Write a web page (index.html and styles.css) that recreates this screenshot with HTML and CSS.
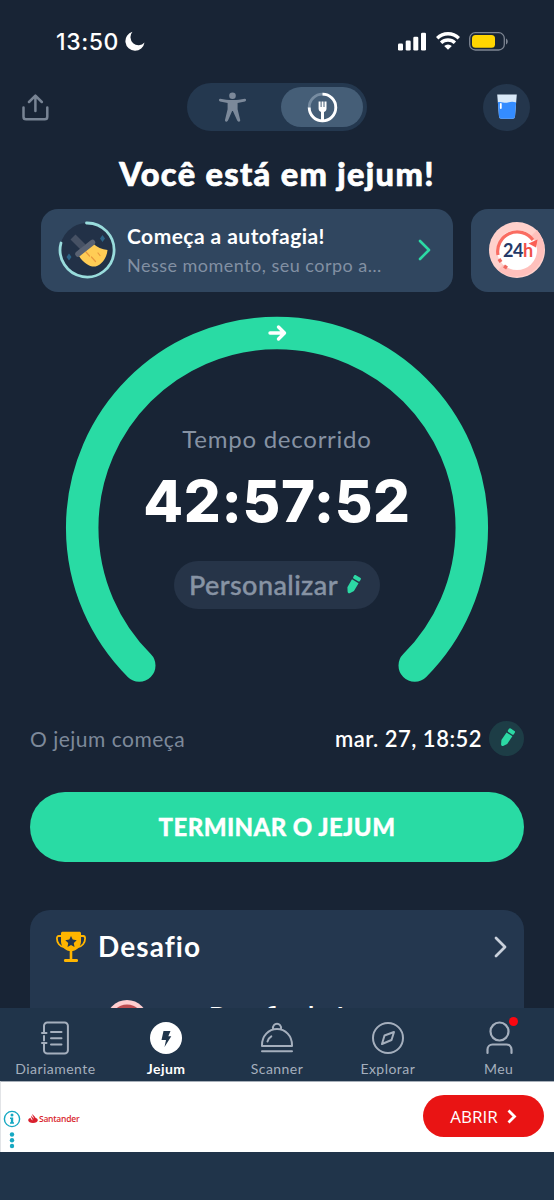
FILE: index.html
```html
<!DOCTYPE html>
<html lang="pt-BR">
<head>
<meta charset="utf-8">
<title>Jejum</title>
<link rel="stylesheet" href="styles.css">
</head>
<body>
<div class="app">
  <header class="status">
    <div class="clock"><span class="time">13:50</span>
      <svg width="20" height="20" viewBox="0 0 20 20"><path d="M7.500.8A9.600 9.600 0 1 0 19.500 11.500 8 8 0 0 1 7.500.8Z" fill="#fff"/></svg>
    </div>
    <div class="signals">
      <svg width="29" height="19" viewBox="0 0 29 19" fill="#fff"><rect x="0" y="11.5" width="5" height="7" rx="1.3"/><rect x="7.7" y="8.5" width="5" height="10" rx="1.3"/><rect x="15.3" y="4.7" width="5" height="13.8" rx="1.3"/><rect x="23" y=".8" width="5" height="17.7" rx="1.3"/></svg>
      <svg width="24" height="18" viewBox="0 0 24 18" fill="none" stroke="#fff" stroke-width="3.400"><path d="M1.200 6.200a15.500 15.500 0 0 1 21.600 0M5.100 10.700a10 10 0 0 1 13.800 0"/><path d="M12 17.700 8.200 14a5.500 5.500 0 0 1 7.600 0Z" fill="#fff" stroke="none"/></svg>
      <svg width="39" height="19" viewBox="0 0 39 19"><rect x=".7" y=".7" width="34.6" height="17.3" rx="5.6" fill="none" stroke="#7d8592" stroke-width="1.3"/><rect x="3" y="3" width="23" height="12.7" rx="3.5" fill="#ffd500"/><path d="M37 6.5v6c2.3-1 2.3-5 0-6Z" fill="#7d8592"/></svg>
    </div>
  </header>

  <div class="toolbar">
    <svg class="share" width="27" height="27" viewBox="0 0 27 27" fill="none" stroke="#788494" stroke-width="2.5" stroke-linecap="round" stroke-linejoin="round"><path d="M1.500 13.500v9.200a2.600 2.600 0 0 0 2.600 2.600h18.600a2.600 2.600 0 0 0 2.600-2.600v-9.200M13.400 17V2M7 8l6.400-6.400L19.800 8"/></svg>
    <div class="switch">
      <div class="switch-item">
        <svg width="27" height="30" viewBox="0 0 27 30" fill="#7c899a"><circle cx="13.500" cy="3.800" r="3.300"/><path d="M1.300 6.800c4 .8 7.500 1.300 12.200 1.300s8.200-.5 12.200-1.300c1.700-.2 1.900 2.300.3 2.700L18.600 11v6.200l2.600 10.700c.3 1.900-2.300 2.500-3 .7L13.900 19h-.8L9 28.600c-.7 1.800-3.300 1.200-3-.7l2.600-10.700V11L1 9.500C-.6 9.100-.4 6.600 1.300 6.800Z"/></svg>
      </div>
      <div class="switch-item active">
        <svg width="31" height="31" viewBox="0 0 31 31" fill="none" stroke="#fff"><circle cx="15.500" cy="15.500" r="13.300" stroke="#778ca1" stroke-width="2.800"/><path d="M15.500 2.200A13.300 13.300 0 1 1 2.200 15.500" stroke-width="2.800"/><path d="M15.500 17.500V29" stroke-width="3"/><path d="M11.600 9.500h2V15h1V9.500h1.900V15h1V9.500h2v7.200c0 2.300-1.700 3.500-3.900 3.500s-4-1.200-4-3.500Z" fill="#fff" stroke="none"/></svg>
      </div>
    </div>
    <div class="water">
      <svg width="20" height="26" viewBox="0 0 20 26"><path d="M.2.500h19.600L18 22.500a2.500 2.500 0 0 1-2.500 2.200h-11A2.500 2.500 0 0 1 2 22.500Z" fill="#d9e9f8"/><path d="M.9 8.300c3.500-1.200 6.500 1.300 10 .2 3-.9 5.500-.9 8.200 0L18 22.500a2.500 2.500 0 0 1-2.500 2.200h-11A2.500 2.500 0 0 1 2 22.500Z" fill="#348cff"/><path d="M3.800 10v4" stroke="#fff" stroke-width="1.800" stroke-linecap="round"/></svg>
    </div>
  </div>

  <h1 class="title"><span>Você está em jejum!</span></h1>

  <div class="carousel">
    <div class="stage">
      <svg class="stage-icon" width="58" height="58" viewBox="0 0 58 58"><circle cx="29" cy="29" r="27" fill="#223147"/><path d="M28.500 2A27 27 0 1 1 3 22" fill="none" stroke="#99dcdc" stroke-width="2.800" stroke-linecap="round"/><path d="m15 16 10 10" stroke="#465164" stroke-width="7"/><path d="m21 35 14-12.500c4 4 9 5.500 14.500 6.500-.5 7-5 14.500-12 16.500-5 .8-12-3-16.500-10.500Z" fill="#ffcc55"/><path d="m28 31 3.500 4M33.500 36l4 4.500M40 32l2 2.500" stroke="#e9983d" stroke-width="1.200" stroke-linecap="round"/><path d="m20 33 14.500-11.500" stroke="#596273" stroke-width="5.500" stroke-linecap="round"/><path d="m44.500 14 2.500 3.500-2.500 3.500-2.500-3.500ZM11 32.500l2.500 3.500-2.500 3.500L8.500 36Z" fill="#2c6487"/></svg>
      <div class="stage-copy"><strong>Começa a autofagia!</strong><span>Nesse momento, seu corpo a…</span></div>
      <svg class="stage-arrow" width="13" height="22" viewBox="0 0 13 22" fill="none" stroke="#2cd9a4" stroke-width="2.600" stroke-linecap="round" stroke-linejoin="round"><path d="m2 2 9 9-9 9"/></svg>
    </div>
    <div class="stage next">
      <svg width="58" height="58" viewBox="0 0 58 58"><circle cx="29" cy="29" r="28" fill="#ffd1cc"/><path d="M49 9A28 28 0 0 1 10 49Z" fill="#ffc0bc"/><circle cx="29" cy="29" r="20" fill="#fff"/><path d="M10 34A19.500 19.500 0 0 1 45 19" fill="none" stroke="#fa6c61" stroke-width="3.200"/><path d="m40.500 22.500 9-4-1.500 8Z" fill="#fa5f55"/><path d="m11 38 2 3M16 45l3 2" stroke="#ef6860" stroke-width="3.400"/><text x="15" y="35.500" class="badge-24" fill="#243968">24<tspan fill="#ef5148">h</tspan></text></svg>
    </div>
  </div>

  <section class="timer">
    <svg class="ring" width="424" height="368" viewBox="0 0 424 368" fill="none"><path d="M74.250 349.500A194.800 194.800 0 1 1 349.750 349.500" stroke="#29dba4" stroke-width="32.500" stroke-linecap="round"/><path d="M205 17h14M213.500 11l6 6-6 6" stroke="#fff" stroke-width="3.400" stroke-linecap="round" stroke-linejoin="round"/></svg>
    <div class="timer-copy">
      <div class="elapsed-label"><span>Tempo decorrido</span></div>
      <div class="elapsed"><span>42:57:52</span></div>
      <button class="customize"><span>Personalizar</span><svg width="16" height="20" viewBox="0 0 16 20" fill="#2cd9a4"><g transform="rotate(30 8 10)"><rect x="4.300" y="0" width="7.600" height="4.300" rx="1.300"/><path d="M4.300 5.600h7.600v9.200l-2.300 3.600c-.8 1.300-2.200 1.300-3 0l-2.300-3.600Z"/></g></svg></button>
    </div>
  </section>

  <div class="start-row">
    <span class="start-label">O jejum começa</span>
    <span class="start-date">mar. 27, 18:52</span>
    <span class="edit"><svg width="16" height="20" viewBox="0 0 16 20" fill="#2cd9a4"><g transform="rotate(34 8 10)"><rect x="4.500" y="0" width="7" height="4.300" rx="1.300"/><path d="M4.500 5.600h7v9.200l-2 3.600c-.8 1.300-2.200 1.300-3 0l-2-3.600Z"/></g></svg></span>
  </div>

  <button class="finish"><span>TERMINAR O JEJUM</span></button>

  <section class="challenge">
    <div class="challenge-head">
      <svg width="30" height="32" viewBox="0 0 30 32"><path d="M5.500 5H2.800C1.500 5 .9 6 .9 7.500c0 4.500 3 8 7 8.500M24.500 5h2.700c1.300 0 1.900 1 1.900 2.500 0 4.500-3 8-7 8.500" fill="none" stroke="#ffb500" stroke-width="1.800"/><path d="M5 2.200C5 1.200 5.800.7 6.700.7h16.600c.9 0 1.700.5 1.700 1.500v8c0 5.500-4 9-8.700 9.800V28h4.200c1.100 0 1.600.7 1.600 1.500s-.5 1.500-1.600 1.500h-11c-1.100 0-1.600-.7-1.600-1.500S8.400 28 9.500 28h4.200v-8C9 19.200 5 15.700 5 10.200Z" fill="#ffb500"/><path d="m15 5 1.700 3.600 4 .6-2.900 2.800.7 4L15 14.100 11.500 16l.7-4-2.900-2.800 4-.6Z" fill="#24374f"/></svg>
      <h2>Desafio</h2>
      <svg width="13" height="22" viewBox="0 0 13 22" fill="none" stroke="#c9d0db" stroke-width="2.800" stroke-linecap="round" stroke-linejoin="round"><path d="m2 2 9 9-9 9"/></svg>
    </div>
    <div class="challenge-body">
      <svg width="42" height="42" viewBox="0 0 42 42"><circle cx="21" cy="21" r="21" fill="#ffced0"/><circle cx="21" cy="21" r="16.500" fill="#bd4c50"/></svg>
      <span>Desafio de J</span>
    </div>
  </section>

  <nav class="tabs">
    <div class="tab"><svg width="32" height="34" viewBox="0 0 32 34" fill="none" stroke="#a5afbd" stroke-width="2" stroke-linecap="round"><path d="M5 8.500V4.800A3.300 3.300 0 0 1 8.300 1.500h17.300A3.300 3.300 0 0 1 28.900 4.800v24.400a3.300 3.300 0 0 1-3.300 3.300H8.300A3.300 3.300 0 0 1 5 29.200v-3.700M5 15v4.500M3 12h4.500M3 22h4.500M12 11h10.500M12 17.300h10.500M12 23.500h10.500M5 8.500V12M5 22v3.500"/></svg><span>Diariamente</span></div>
    <div class="tab selected"><svg width="32" height="34" viewBox="0 0 32 34"><circle cx="16" cy="17" r="16" fill="#fff"/><path d="M13.500 10h7l-2.200 5.200h3L14.500 26 16 19h-4.500Z" fill="#20354b"/></svg><span>Jejum</span></div>
    <div class="tab"><svg width="34" height="34" viewBox="0 0 34 34" fill="none" stroke="#a5afbd" stroke-width="2" stroke-linecap="round" stroke-linejoin="round"><path d="M2 25v-1C2 15 8.500 8 17 8S32 15 32 24v1ZM2 30.300h30M13 8C12 1 22 1 21 8M7.500 20.500c.5-2.500 1.800-4 3.800-5.200"/></svg><span>Scanner</span></div>
    <div class="tab"><svg width="34" height="34" viewBox="0 0 34 34" fill="none" stroke="#a5afbd" stroke-width="2" stroke-linejoin="round"><circle cx="17" cy="17" r="15"/><path d="m23 11-2.500 8-9.500 4 2.500-8.500Z"/></svg><span>Explorar</span></div>
    <div class="tab"><svg width="34" height="34" viewBox="0 0 34 34" fill="none" stroke="#a5afbd" stroke-width="2.200" stroke-linecap="round"><circle cx="17.500" cy="10.500" r="9"/><path d="M5.500 32v-3.500a5 5 0 0 1 5-5h14a5 5 0 0 1 5 5V32"/></svg><span>Meu</span><i class="dot"></i></div>
  </nav>

  <aside class="ad">
    <div class="ad-marks">
      <svg width="18" height="40" viewBox="0 0 18 40" fill="#16a8c2"><circle cx="9" cy="9" r="7.600" fill="none" stroke="#16a8c2" stroke-width="1.400"/><circle cx="9" cy="5" r="1.500"/><path d="M7 7.500h3.200v4.700h.8v1.500H7v-1.500h.9V9H7Z"/><circle cx="9" cy="24.500" r="2.200"/><circle cx="9" cy="30.300" r="2.200"/><circle cx="9" cy="36" r="2.200"/></svg>
    </div>
    <div class="brand"><svg width="10" height="9" viewBox="0 0 10 9" fill="#d91f2d"><path d="M4.600 0c-.4 1 0 1.700.5 2.500.4.700.8 1.300.5 2.200C5 3.500 3.500 2.700 3.700 1.500c-.8 1-.5 2 .2 3 .5.700.7 1.200.4 2C3.700 5.500 2.500 4.800 2.600 3.700 1 4.200.2 5 .2 6.200.2 7.800 2.300 9 5 9s4.800-1.200 4.800-2.800c0-1.200-.9-2-2.400-2.500C7.300 2.300 5 1.700 4.600 0Z"/></svg><span>Santander</span></div>
    <button class="open"><span>ABRIR</span><svg width="10" height="15" viewBox="0 0 10 15" fill="none" stroke="#fff" stroke-width="2.800"><path d="m1.500 1.500 6 6-6 6"/></svg></button>
  </aside>
</div>
</body>
</html>
```
FILE: styles.css
```css
* { box-sizing: border-box; }
body { margin: 0; background: #182435; font-family: Lato, "Liberation Sans", sans-serif; color: #fff; }
svg { display: block; flex: none; }
button { border: 0; padding: 0; font: inherit; color: inherit; }
span, strong { white-space: nowrap; }

.app { width: 554px; height: 1200px; display: flex; flex-direction: column; overflow: hidden; background: #182435; }
.app > * { flex: none; }

.status { height: 83px; display: flex; justify-content: space-between; align-items: center; padding: 0 46px 1px 56px; }
.clock { display: flex; align-items: center; gap: 6px; }
.time { padding-top: 1px; font: 500 23px Inter, sans-serif; letter-spacing: .6px; }
.signals { display: flex; align-items: center; gap: 9px; }

.toolbar { height: 48px; display: flex; align-items: center; justify-content: space-between; padding: 0 24px 0 22px; }
.switch { width: 180px; height: 48px; margin-left: 22px; padding: 4px; border-radius: 24px; background: #24384f; display: flex; }
.switch-item { flex: 1; display: flex; align-items: center; justify-content: center; padding-right: 8px; }
.switch-item.active { flex: 0 0 82px; padding: 0; border-radius: 20px; background: #455e77; }
.water { width: 47px; height: 47px; border-radius: 50%; background: #24364c; display: flex; align-items: center; justify-content: center; }
.water svg { margin-bottom: 1px; }

.title { margin: 0; height: 78px; padding-top: 6px; display: flex; align-items: center; justify-content: center; font-size: 32.5px; font-weight: 900; letter-spacing: 1.35px; -webkit-text-stroke: .7px #fff; }

.carousel { height: 83px; padding-left: 41px; display: flex; gap: 18px; overflow: hidden; }
.stage { flex: 0 0 412px; display: flex; align-items: center; padding: 0 22px 0 17px; border-radius: 17px; background: #30465f; }
.stage-copy { margin-left: 11px; padding-bottom: 1px; display: flex; flex-direction: column; gap: 5px; flex: 1; }
.stage-copy strong { font-size: 21px; line-height: 25px; font-weight: 700; letter-spacing: .45px; }
.stage-copy span { font-size: 18px; line-height: 24px; color: #8290a3; letter-spacing: .48px; }
.stage svg { margin-bottom: 1px; }
.next { padding-left: 17px; }
.badge-24 { font: 700 18px Lato, sans-serif; letter-spacing: -.5px; }

.timer { margin-top: 24px; height: 368px; display: grid; justify-content: center; }
.ring, .timer-copy { grid-area: 1 / 1; }
.timer-copy { padding-top: 106px; display: flex; flex-direction: column; align-items: center; }
.elapsed-label { height: 34px; line-height: 34px; font-size: 24px; color: #8692a3; letter-spacing: .75px; }
.elapsed { margin-top: 10px; height: 70px; line-height: 70px; font-family: Inter, sans-serif; font-size: 58px; font-weight: 800; letter-spacing: .6px; }
.customize { margin-top: 25px; width: 206px; height: 48px; padding: 0 4px 1px 0; border-radius: 24px; background: #263448; display: flex; align-items: center; justify-content: center; gap: 7px; color: #8793a4; font-size: 27px; font-weight: 500; letter-spacing: .4px; -webkit-text-stroke: .4px #8793a4; }

.start-row { height: 107px; padding: 1px 30px 0; display: flex; align-items: center; }
.start-label { flex: 1; font-size: 21px; color: #7d899a; letter-spacing: .5px; }
.start-date { font-size: 22px; font-weight: 600; letter-spacing: .5px; }
.edit { width: 35px; height: 35px; margin-left: 7px; border-radius: 50%; background: #1d3d46; display: flex; align-items: center; justify-content: center; }

.finish { height: 70px; margin: 1px 30px 0; padding-bottom: 2px; border-radius: 35px; background: #29dba4; font-size: 24px; font-weight: 900; letter-spacing: .4px; -webkit-text-stroke: .3px #fff; }

.challenge { height: 98px; margin: 48px 30px 0; border-radius: 20px 20px 0 0; background: #24374f; overflow: hidden; }
.challenge-head { height: 74px; padding: 0 17px 0 26px; display: flex; align-items: center; }
.challenge-head h2 { flex: 1; margin: 0 0 2px 12px; font-size: 28px; font-weight: 700; letter-spacing: 1.1px; }
.challenge-body { margin: 16px 0 0 76px; display: flex; gap: 61px; }
.challenge-body span { padding-top: 1px; font-size: 25px; line-height: 28px; font-weight: 700; }

.tabs { height: 73px; display: grid; grid-template-columns: repeat(5, 1fr); background: #20344a; }
.tab { position: relative; padding-top: 13px; display: flex; flex-direction: column; align-items: center; color: #a5afbd; font-size: 14px; letter-spacing: .45px; }
.tab span { margin-top: 5px; line-height: 18px; }
.selected { color: #fff; font-weight: 700; }
.dot { position: absolute; width: 9px; height: 9px; top: 9px; right: 36px; border-radius: 50%; background: #fb0710; }

.ad { height: 71px; border-top: 1px solid #a7afb9; border-left: 1px solid #e2e4e7; background: #fff; display: flex; align-items: center; padding: 0 10px 0 2px; }
.ad-marks { padding-top: 25px; }
.brand { margin-left: 7px; flex: 1; padding-top: 2px; display: flex; align-items: center; gap: 1px; color: #d91f2d; font: 600 8.5px "Open Sans", sans-serif; letter-spacing: -.25px; }
.open { width: 121px; height: 42px; margin-bottom: 2px; border-radius: 21px; background: #e91414; display: flex; align-items: center; justify-content: center; gap: 9px; font: 400 17px "Open Sans", sans-serif; }
.app::after { content: ""; flex: 1; background: #20344a; }
```
